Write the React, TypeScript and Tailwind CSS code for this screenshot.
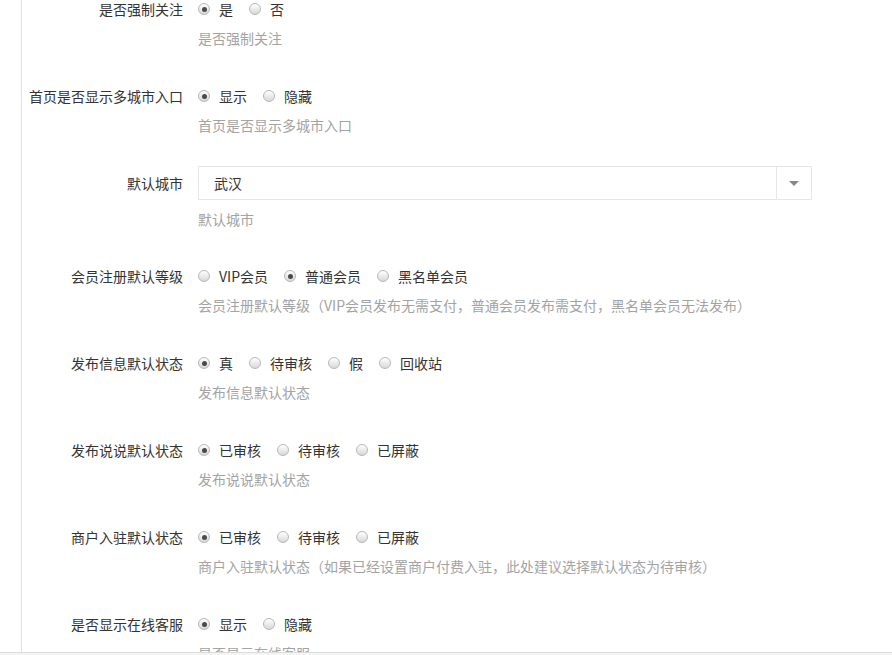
type Option = { label: string; checked?: boolean };

interface RadioRowProps {
  label: string;
  options: Option[];
  help: string;
}

function Radio({ label, checked }: Option) {
  return (
    <label className="flex items-center mr-[16px] cursor-pointer">
      <span className="w-[12px] h-[12px] rounded-full border border-[#b8b8b8] bg-gradient-to-b from-[#ffffff] to-[#d8d8d8] flex items-center justify-center shrink-0">
        {checked && <span className="w-[5px] h-[5px] rounded-full bg-[#4a4a4a]" />}
      </span>
      <span className="ml-[9px] text-[#333]">{label}</span>
    </label>
  );
}

function RadioRow({ label, options, help }: RadioRowProps) {
  return (
    <div className="flex pb-[38px]">
      <div className="w-[161px] text-right leading-[20px] text-[#333] shrink-0">{label}</div>
      <div className="pl-[15px]">
        <div className="flex items-center h-[20px]">
          {options.map((o, i) => (
            <Radio key={i} label={o.label} checked={o.checked} />
          ))}
        </div>
        <p className="mt-[9px] leading-[20px] text-[#a3a3a3]">{help}</p>
      </div>
    </div>
  );
}

export default function App() {
  return (
    <div
      className="w-[892px] h-[655px] flex flex-col bg-white overflow-hidden text-[14px]"
      style={{ fontFamily: '"Noto Sans CJK SC", "Noto Sans", sans-serif' }}
    >
      <div className="flex-1 flex overflow-hidden">
        <div className="w-[22px] border-r border-[#e2e2e2] shrink-0" />
        <div className="flex-1 flex flex-col -mt-[1px]">
          <RadioRow
            label="是否强制关注"
            options={[{ label: '是', checked: true }, { label: '否' }]}
            help="是否强制关注"
          />
          <div className="-mb-[7px]">
            <RadioRow
              label="首页是否显示多城市入口"
              options={[{ label: '显示', checked: true }, { label: '隐藏' }]}
              help="首页是否显示多城市入口"
            />
          </div>

          {/* 默认城市 */}
          <div className="flex pb-[37px]">
            <div className="w-[161px] text-right h-[34px] leading-[34px] text-[#333] shrink-0">默认城市</div>
            <div className="pl-[15px]">
              <div className="w-[614px] h-[34px] border border-[#e6e6e6] flex">
                <div className="flex-1 pl-[15px] leading-[32px] text-[#333]">武汉</div>
                <div className="w-[35px] border-l border-[#e6e6e6] flex items-center justify-center">
                  <span className="w-0 h-0 border-l-[5px] border-r-[5px] border-t-[5px] border-l-transparent border-r-transparent border-t-[#888]" />
                </div>
              </div>
              <p className="mt-[9px] leading-[20px] text-[#a3a3a3]">默认城市</p>
            </div>
          </div>

          <RadioRow
            label="会员注册默认等级"
            options={[{ label: 'VIP会员' }, { label: '普通会员', checked: true }, { label: '黑名单会员' }]}
            help="会员注册默认等级（VIP会员发布无需支付，普通会员发布需支付，黑名单会员无法发布）"
          />
          <RadioRow
            label="发布信息默认状态"
            options={[{ label: '真', checked: true }, { label: '待审核' }, { label: '假' }, { label: '回收站' }]}
            help="发布信息默认状态"
          />
          <RadioRow
            label="发布说说默认状态"
            options={[{ label: '已审核', checked: true }, { label: '待审核' }, { label: '已屏蔽' }]}
            help="发布说说默认状态"
          />
          <RadioRow
            label="商户入驻默认状态"
            options={[{ label: '已审核', checked: true }, { label: '待审核' }, { label: '已屏蔽' }]}
            help="商户入驻默认状态（如果已经设置商户付费入驻，此处建议选择默认状态为待审核）"
          />
          <RadioRow
            label="是否显示在线客服"
            options={[{ label: '显示', checked: true }, { label: '隐藏' }]}
            help="是否显示在线客服"
          />
        </div>
      </div>
      <div className="h-[3px] border-t border-[#dcdcdc] bg-[#f4f4f4] shrink-0" />
    </div>
  );
}
